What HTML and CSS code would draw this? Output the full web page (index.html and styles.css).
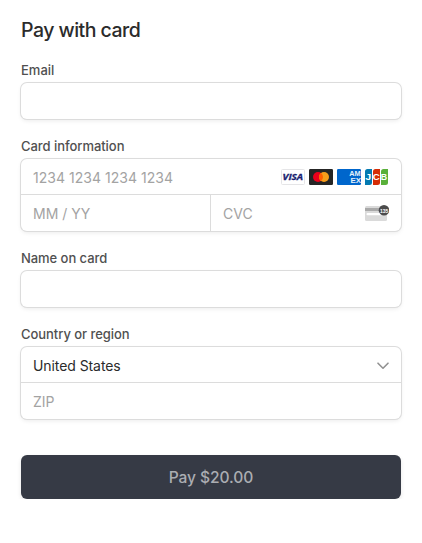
FILE: index.html
```html
<!DOCTYPE html>
<html lang="en">
<head>
<meta charset="utf-8">
<title>Pay with card</title>
<link rel="stylesheet" href="styles.css">
</head>
<body>
<form class="payment">
  <h1 class="title">Pay with card</h1>

  <div class="group">
    <label class="label label-email" for="email">Email</label>
    <div class="box"><input class="input" id="email" type="text"></div>
  </div>

  <div class="group">
    <label class="label label-card" for="number">Card information</label>
    <div class="box">
      <div class="row">
        <input class="input number" id="number" type="text" placeholder="1234 1234 1234 1234">
        <div class="brands">
          <svg width="24" height="16" viewBox="0 0 24 16">
            <rect x=".5" y=".5" width="23" height="15" rx="1" fill="#fff" stroke="#e5e5e7"/>
            <text class="visa" x="1.6" y="11.4" textLength="20.5" lengthAdjust="spacingAndGlyphs">VISA</text>
          </svg>
          <svg width="24" height="16" viewBox="0 0 24 16">
            <rect width="24" height="16" rx="1.2" fill="#252525"/>
            <circle cx="9" cy="8" r="5" fill="#eb001b"/>
            <circle cx="15" cy="8" r="5" fill="#f79e1b"/>
            <path d="M12 4a5 5 0 0 1 0 8a5 5 0 0 1 0-8z" fill="#ff5f00"/>
          </svg>
          <svg width="24" height="16" viewBox="0 0 24 16">
            <rect width="24" height="16" rx="1.2" fill="#0066cc"/>
            <text class="amex" x="12.2" y="7.4" textLength="11.4" lengthAdjust="spacingAndGlyphs">AM</text>
            <text class="amex" x="13.4" y="13.8" textLength="10.6" lengthAdjust="spacingAndGlyphs">EX</text>
          </svg>
          <svg width="24" height="16" viewBox="0 0 24 16">
            <path d="M2.5 0H7v13.5A2.5 2.5 0 0 1 4.5 16H0V2.5A2.5 2.5 0 0 1 2.5 0z" fill="#047ab1"/>
            <path d="M10.5 0H15v13.5a2.5 2.5 0 0 1-2.5 2.5H8V2.5A2.5 2.5 0 0 1 10.5 0z" fill="#d42d06"/>
            <path d="M18.5 0H23v13.5a2.5 2.5 0 0 1-2.5 2.5H16V2.5A2.5 2.5 0 0 1 18.5 0z" fill="#59b03a"/>
            <text class="jcb" x=".2" y="11" textLength="6" lengthAdjust="spacingAndGlyphs">J</text>
            <text class="jcb" x="7.8" y="11" textLength="7" lengthAdjust="spacingAndGlyphs">C</text>
            <text class="jcb" x="15.8" y="11" textLength="6.4" lengthAdjust="spacingAndGlyphs">B</text>
          </svg>
        </div>
      </div>
      <div class="row split">
        <div class="cell"><input class="input expiry" type="text" placeholder="MM / YY"></div>
        <div class="cell cell-cvc">
          <input class="input cvc" type="text" placeholder="CVC">
          <svg class="cvc-icon" width="24" height="18" viewBox="0 0 24 18">
            <rect y="2" width="22" height="15" rx="1.5" fill="#dadada"/>
            <rect y="4" width="22" height="3" fill="#a9a9a9"/>
            <rect x="1.5" y="9" width="17" height="2.3" rx="1" fill="#fff"/>
            <circle cx="19" cy="6.3" r="5.3" fill="#4b4b4b"/>
            <text class="cvc-digits" x="14.9" y="8.7" textLength="8.4" lengthAdjust="spacingAndGlyphs">135</text>
          </svg>
        </div>
      </div>
    </div>
  </div>

  <div class="group">
    <label class="label label-name" for="name">Name on card</label>
    <div class="box"><input class="input" id="name" type="text"></div>
  </div>

  <div class="group">
    <label class="label label-country" for="zip">Country or region</label>
    <div class="box">
      <div class="row select">
        <span class="country">United States</span>
        <svg width="12" height="8" viewBox="0 0 12 8"><path d="M1 1.2l5 5 5-5" fill="none" stroke="#929292" stroke-width="1.6" stroke-linecap="round" stroke-linejoin="round"/></svg>
      </div>
      <div class="row split"><input class="input zip" id="zip" type="text" placeholder="ZIP"></div>
    </div>
  </div>

  <button class="pay" type="button">Pay $20.00</button>
</form>
</body>
</html>
```
FILE: styles.css
```css
* { box-sizing: border-box; }

body {
  margin: 0;
  background: #fff;
  color: #2b2b2b;
  font-family: Inter, "Liberation Sans", sans-serif;
}

.payment {
  width: 380px;
  margin: 0 0 0 21px;
  padding-top: 18px;
}

.title {
  margin: 0 0 20px;
  font-size: 19.5px;
  line-height: 24px;
  font-weight: 500;
  letter-spacing: -0.52px;
  white-space: nowrap;
}

.group { margin-bottom: 19px; }

.label {
  display: block;
  height: 17px;
  margin-bottom: 4px;
  font-size: 13px;
  line-height: 17px;
  font-weight: 500;
  letter-spacing: -0.05px;
  color: #505050;
}

.label-email { letter-spacing: 0; }

.box {
  border-radius: 6px;
  background: #fff;
  box-shadow: 0 0 0 1px #dcdcdc, 0 2px 4px rgba(0, 0, 0, .08), 0 1px 1px rgba(0, 0, 0, .03);
}

.row {
  display: flex;
  align-items: center;
  height: 35px;
}

.row.split {
  height: 37px;
  border-top: 1px solid #dcdcdc;
}

.input {
  display: block;
  width: 100%;
  min-width: 0;
  height: 36px;
  padding: 1px 12px 0;
  border: 0;
  outline: 0;
  background: transparent;
  font: 400 14px/20px Inter, "Liberation Sans", sans-serif;
  color: #2b2b2b;
}

.input::placeholder { color: #a3a3a3; opacity: 1; }

.number { padding-top: 1px; letter-spacing: 0.03px; }

.brands {
  display: flex;
  flex: none;
  gap: 4px;
  padding: 1px 12px 0 0;
}

.brands svg { display: block; }

.cell {
  display: flex;
  align-items: center;
  width: 189px;
  height: 36px;
}

.cell-cvc {
  width: 191px;
  border-left: 1px solid #dcdcdc;
}

.cvc-icon { flex: none; margin: 0 12px 0 0; }

.select {
  justify-content: space-between;
  padding: 2px 12px 0;
  font-size: 14px;
  letter-spacing: -0.08px;
}

.pay {
  display: block;
  width: 380px;
  height: 44px;
  margin-top: 36px;
  padding: 2px 0 0;
  border: 0;
  border-radius: 6px;
  background: #363a45;
  box-shadow: 0 2px 4px rgba(0, 0, 0, .1);
  color: #abadb2;
  font: 500 15.6px/20px Inter, "Liberation Sans", sans-serif;
  letter-spacing: -0.08px;
}

.visa { font: italic 700 9px "Open Sans", sans-serif; fill: #1a1f71; stroke: #1a1f71; stroke-width: .3px; }
.amex { font: 700 6.6px "Liberation Sans", sans-serif; fill: #e4f1fb; }
.jcb { font: 700 8.2px "Liberation Sans", sans-serif; fill: #fff; }
.cvc-digits { font: 700 6.2px "Liberation Sans", sans-serif; fill: #fff; }
```
